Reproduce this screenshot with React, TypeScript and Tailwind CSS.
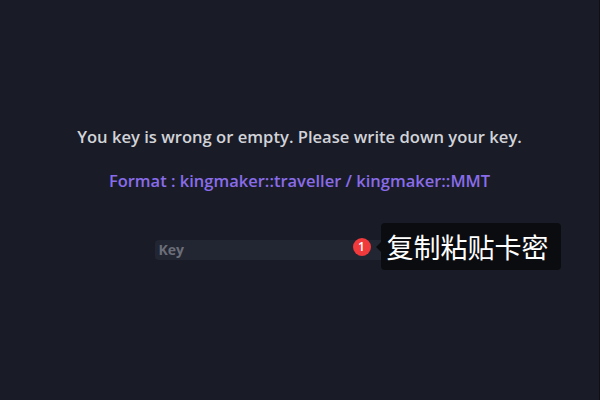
export default function App() {
  return (
    <div className="flex h-[400px] w-[600px] bg-[#191c27] font-['Open_Sans',sans-serif]">
      <div className="flex flex-1 flex-col items-center pt-[127px]">
        <p className="text-[16.6px] font-semibold leading-5 text-[#d2d3d8]">
          You key is wrong or empty. Please write down your key.
        </p>
        <p className="mt-6 text-[16.5px] font-semibold leading-5 text-[#8a6cea]">
          Format : kingmaker::traveller / kingmaker::MMT
        </p>
        <div className="relative mt-[46px] w-[290px]">
          <input
            placeholder="Key"
            className="h-5 w-full rounded bg-[#222632] px-1 text-[14px] font-bold text-[#d2d3d8] outline-none placeholder:text-[#6b6e79]"
          />
          <span className="absolute left-[198px] top-[1px] flex h-[18px] w-[18px] items-center justify-center rounded-full bg-[#f03a3c] text-[12px] font-semibold text-white">
            1
          </span>
          <div className="absolute left-[226px] top-[-14px] flex h-[47px] w-[180px] items-center rounded bg-[#0b0c0f] pl-[6px]">
            <span className="absolute left-[-5px] top-[19px] h-0 w-0 border-y-[5px] border-r-[5px] border-y-transparent border-r-[#0b0c0f]" />
            <span className="font-['Noto_Sans_CJK_SC',sans-serif] text-[27px] leading-none text-white">
              复制粘贴卡密
            </span>
          </div>
        </div>
      </div>
      <div className="w-px bg-[#0e1015]" />
    </div>
  );
}
